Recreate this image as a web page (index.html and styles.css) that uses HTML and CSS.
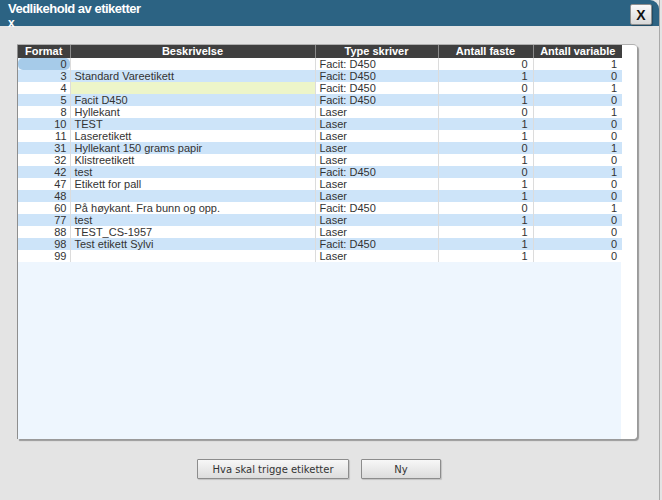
FILE: index.html
```html
<!DOCTYPE html>
<html>
<head>
<meta charset="utf-8">
<link rel="stylesheet" href="styles.css">
</head>
<body>
<div class="dialog">
  <div class="titlebar">
    <div class="title"><div class="t1">Vedlikehold av etiketter</div><div class="t2">x</div></div>
    <button class="close">X</button>
  </div>
  <div class="content">
    <div class="gridbox">
      <table class="grid">
        <colgroup>
          <col class="c-format"><col class="c-desc"><col class="c-type"><col class="c-faste"><col class="c-var">
        </colgroup>
        <thead>
          <tr><th>Format</th><th>Beskrivelse</th><th>Type skriver</th><th>Antall faste</th><th>Antall variable</th></tr>
        </thead>
        <tbody>
          <tr><td class="num sel">0</td><td></td><td>Facit: D450</td><td class="num">0</td><td class="num">1</td></tr>
          <tr><td class="num">3</td><td>Standard Vareetikett</td><td>Facit: D450</td><td class="num">1</td><td class="num">0</td></tr>
          <tr><td class="num">4</td><td class="edit"></td><td>Facit: D450</td><td class="num">0</td><td class="num">1</td></tr>
          <tr><td class="num">5</td><td>Facit D450</td><td>Facit: D450</td><td class="num">1</td><td class="num">0</td></tr>
          <tr><td class="num">8</td><td>Hyllekant</td><td>Laser</td><td class="num">0</td><td class="num">1</td></tr>
          <tr><td class="num">10</td><td>TEST</td><td>Laser</td><td class="num">1</td><td class="num">0</td></tr>
          <tr><td class="num">11</td><td>Laseretikett</td><td>Laser</td><td class="num">1</td><td class="num">0</td></tr>
          <tr><td class="num">31</td><td>Hyllekant 150 grams papir</td><td>Laser</td><td class="num">0</td><td class="num">1</td></tr>
          <tr><td class="num">32</td><td>Klistreetikett</td><td>Laser</td><td class="num">1</td><td class="num">0</td></tr>
          <tr><td class="num">42</td><td>test</td><td>Facit: D450</td><td class="num">0</td><td class="num">1</td></tr>
          <tr><td class="num">47</td><td>Etikett for pall</td><td>Laser</td><td class="num">1</td><td class="num">0</td></tr>
          <tr><td class="num">48</td><td></td><td>Laser</td><td class="num">1</td><td class="num">0</td></tr>
          <tr><td class="num">60</td><td>På høykant. Fra bunn og opp.</td><td>Facit: D450</td><td class="num">0</td><td class="num">1</td></tr>
          <tr><td class="num">77</td><td>test</td><td>Laser</td><td class="num">1</td><td class="num">0</td></tr>
          <tr><td class="num">88</td><td>TEST_CS-1957</td><td>Laser</td><td class="num">1</td><td class="num">0</td></tr>
          <tr><td class="num">98</td><td>Test etikett Sylvi</td><td>Facit: D450</td><td class="num">1</td><td class="num">0</td></tr>
          <tr><td class="num">99</td><td></td><td>Laser</td><td class="num">1</td><td class="num">0</td></tr>
        </tbody>
      </table>
    </div>
    <div class="actions">
      <button class="btn wide">Hva skal trigge etiketter</button>
      <button class="btn narrow">Ny</button>
    </div>
  </div>
</div>
</body>
</html>
```

FILE: styles.css
```css
html, body {
  margin: 0;
  padding: 0;
  background: #e4e4e4;
}
.dialog {
  width: 659px;
  height: 500px;
  background: #e4e4e4;
  border-right: 1px solid #a9a9a9;
  overflow: hidden;
}
.titlebar {
  height: 26px;
  background: #2c6383;
  border-top-right-radius: 9px;
  display: flex;
  justify-content: space-between;
  align-items: flex-start;
  padding: 0 7px 0 8px;
}
.title {
  color: #fff;
  font-family: "Liberation Sans", sans-serif;
  font-weight: bold;
  letter-spacing: -0.5px;
  padding-top: 2px;
}
.t1 {
  font-size: 13px;
  line-height: 13px;
}
.t2 {
  font-size: 12px;
  line-height: 12px;
  margin-top: 2px;
}
.close {
  margin-top: 4px;
  width: 22px;
  height: 21px;
  padding: 0;
  border: 1px solid #8f8f8f;
  border-radius: 2px;
  background: linear-gradient(#fafafa, #d9d9d9);
  font-family: "Liberation Sans", sans-serif;
  font-weight: bold;
  font-size: 14px;
  color: #111;
  box-shadow: 1px 1px 1px rgba(0,0,0,0.25);
}
.content {
  padding: 18px 0 0 17px;
}
.gridbox {
  width: 619px;
  height: 394px;
  border-left: 1px solid #8e8e8e;
  border-top: 1px solid #b0b0b0;
  border-bottom-right-radius: 4px;
  border-top-right-radius: 4px;
  box-shadow: 2px 2px 1px #9a9a9a;
  background: linear-gradient(to right, #eef6fe 603px, #ffffff 603px);
}
.grid {
  width: 604px;
  border-collapse: collapse;
  table-layout: fixed;
}
.c-format { width: 52px; }
.c-desc { width: 245px; }
.c-type { width: 123px; }
.c-faste { width: 95px; }
.c-var { width: 89px; }
.grid th {
  height: 13px;
  padding: 0;
  background: #3f3f3f;
  color: #fff;
  font-family: "Liberation Sans", sans-serif;
  font-weight: bold;
  font-size: 11px;
  line-height: 13px;
  text-align: center;
  border-right: 1px solid #8a8a8a;
  white-space: nowrap;
  overflow: hidden;
}
.grid th:last-child { border-right: none; }
.grid td {
  height: 12px;
  padding: 0 4px;
  font-family: "Liberation Sans", sans-serif;
  font-size: 11px;
  line-height: 12px;
  color: #333;
  border-right: 1px solid #dcdcdc;
  white-space: nowrap;
  overflow: hidden;
}
.grid td:last-child { border-right: none; }
.grid tbody tr:nth-child(odd) td { background: #ffffff; }
.grid tbody tr:nth-child(even) td { background: #cde4f9; }
.grid td.num { text-align: right; padding-right: 3px; }
.grid td:nth-child(4), .grid td:nth-child(5) { padding-right: 5px; }
.grid tbody tr td.sel {
  background: #a6cbe9;
  border-radius: 5px;
}
.grid tbody tr td.edit { background: #edf5c9; }
.actions {
  display: flex;
  gap: 12px;
  padding: 20px 0 0 180px;
}
.btn {
  height: 20px;
  padding: 0;
  border: 1px solid #8c8c8c;
  border-radius: 1px;
  background: linear-gradient(#f7f7f7, #dcdcdc);
  font-family: "DejaVu Sans", sans-serif;
  font-size: 10px;
  color: #333;
  box-shadow: 1px 1px 1px rgba(0,0,0,0.15);
}
.wide { width: 152px; }
.narrow { width: 80px; }
```
